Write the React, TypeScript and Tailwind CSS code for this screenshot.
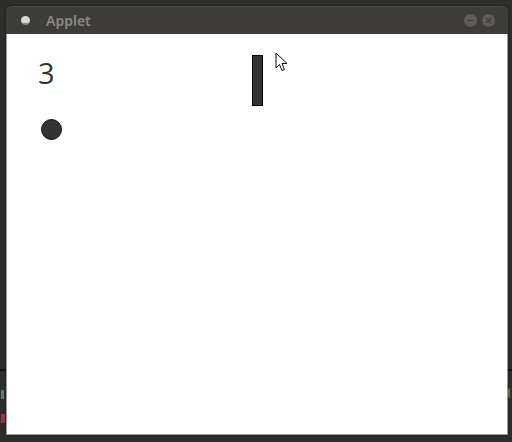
import React from "react";

export default function App() {
  return (
    <div className="relative w-[512px] h-[442px] overflow-hidden bg-[#2d2d2b]">
      {/* desktop bits behind the window */}
      <div className="absolute left-0 top-[369px] w-[6px] h-[2px] bg-[#111]" />
      <div className="absolute right-0 top-[369px] w-[4px] h-[2px] bg-[#111]" />
      <div className="absolute left-[1px] top-[390px] w-[3px] h-[9px] bg-[#5f7d6f]" />
      <div className="absolute left-[1px] top-[414px] w-[4px] h-[9px] bg-[#8a3a4a]" />
      <div className="absolute right-[1px] top-[388px] w-[3px] h-[10px] rounded-l-full border-l-2 border-[#6b6a52]" />

      <div className="pt-[6px] pl-[6px]">
        <div className="w-[502px] h-[429px] flex flex-col rounded-t-[6px] bg-[#3c3b37] shadow-[0_0_2px_rgba(0,0,0,0.6)]">
          {/* title bar */}
          <div className="h-[28px] flex items-center rounded-t-[6px] bg-[#3d3c38] border-t border-[#4a4945]">
            <div className="ml-[15px] w-[9px] h-[9px] rounded-full bg-[#d8d8d4] border-b-2 border-[#8e8d88]" />
            <span
              className="ml-[16px] text-[14px] leading-none font-semibold text-[#8a8985]"
              style={{ fontFamily: '"Noto Sans", "DejaVu Sans", sans-serif' }}
            >
              Applet
            </span>
            <div className="ml-auto mr-[13px] flex items-center gap-[5px]">
              <div className="w-[13px] h-[13px] rounded-full bg-[#5e5d59] flex items-center justify-center">
                <div className="w-[7px] h-[1px] bg-[#3c3b37]" />
              </div>
              <div className="w-[13px] h-[13px] rounded-full bg-[#5e5d59] flex items-center justify-center">
                <svg width="7" height="7" viewBox="0 0 7 7">
                  <path d="M1 1L6 6M6 1L1 6" stroke="#3c3b37" strokeWidth="1.2" />
                </svg>
              </div>
            </div>
          </div>
          {/* content: free game canvas */}
          <div className="relative flex-1 bg-white border-x border-b border-[#9a9a98]">
            <span
              className="absolute left-[31px] top-[24px] text-[29px] leading-none text-[#333]"
              style={{ fontFamily: '"Open Sans", "DejaVu Sans", sans-serif' }}
            >
              3
            </span>
            <div className="absolute left-[34px] top-[85px] w-[21px] h-[21px] rounded-full bg-[#333] border border-[#111]" />
            <div className="absolute left-[245px] top-[21px] w-[11px] h-[51px] bg-[#333] border border-[#000]" />
            <svg
              className="absolute left-[268px] top-[18px]"
              width="14"
              height="21"
              viewBox="0 0 14 21"
            >
              <path
                d="M1 1 L1 16 L4.5 12.5 L7 18.5 L9.5 17.5 L7 11.5 L12 11.5 Z"
                fill="#fff"
                stroke="#000"
                strokeWidth="1"
                strokeLinejoin="round"
              />
            </svg>
          </div>
        </div>
      </div>
    </div>
  );
}
